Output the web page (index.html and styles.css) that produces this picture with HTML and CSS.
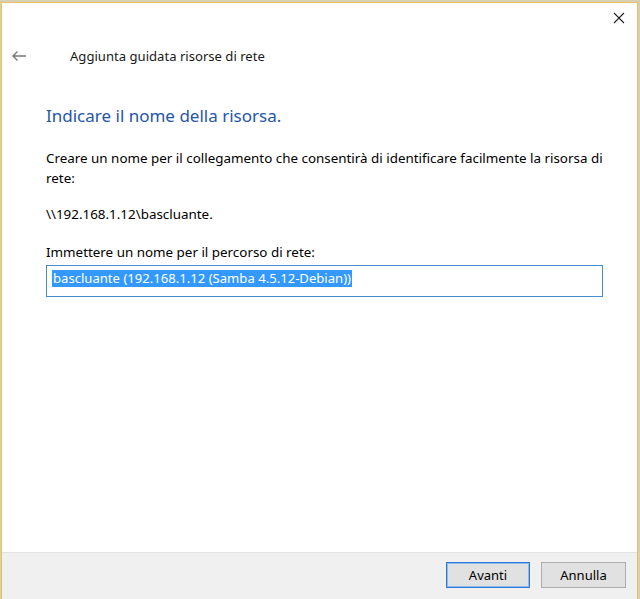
FILE: index.html
```html
<!DOCTYPE html>
<html lang="it">
<head>
<meta charset="utf-8">
<title>Aggiunta guidata risorse di rete</title>
<link rel="stylesheet" href="styles.css">
</head>
<body>
<div class="screen">
  <div class="window">
    <div class="titlebar">
      <svg class="close" width="12" height="12" viewBox="0 0 12 12"><path d="M1 1 L11 11 M11 1 L1 11" stroke="#222" stroke-width="1.1" fill="none"/></svg>
    </div>
    <div class="header">
      <svg class="back" width="16" height="12" viewBox="0 0 16 12"><path d="M15 6 H2 M6.5 1.5 L2 6 L6.5 10.5" stroke="#777" stroke-width="1.3" fill="none"/></svg>
      <span class="header-title">Aggiunta guidata risorse di rete</span>
    </div>
    <div class="content">
      <h1 class="instruction">Indicare il nome della risorsa.</h1>
      <p class="para">Creare un nome per il collegamento che consentirà di identificare facilmente la risorsa di rete:</p>
      <p class="path">\\192.168.1.12\bascluante.</p>
      <p class="label">Immettere un nome per il percorso di rete:</p>
      <div class="input"><span class="selected">bascluante (192.168.1.12 (Samba 4.5.12-Debian))</span></div>
    </div>
    <div class="footer">
      <button class="btn btn-default">Avanti</button>
      <button class="btn">Annulla</button>
    </div>
  </div>
</div>
</body>
</html>
```
FILE: styles.css
```css
html, body {
  margin: 0;
  padding: 0;
}
body {
  font-family: "Noto Sans", "Open Sans", sans-serif;
  font-size: 13px;
  color: #000;
}
.screen {
  width: 640px;
  height: 599px;
  background: #d9cfb4;
  overflow: hidden;
  display: flex;
  align-items: stretch;
}
.window {
  width: 635px;
  flex: none;
  margin: 2px 0 0 1px;
  border: 1px solid #e7c35f;
  border-bottom: none;
  background: #fff;
  display: flex;
  flex-direction: column;
}
.titlebar {
  height: 30px;
  display: flex;
  justify-content: flex-end;
  align-items: center;
  padding-right: 12px;
}
.close {
  display: block;
}
.header {
  margin-top: 11px;
  height: 24px;
  display: flex;
  align-items: center;
}
.back {
  margin-left: 9px;
  display: block;
}
.header-title {
  margin-left: 43px;
  font-size: 13.1px;
  color: #1a1a1a;
}
.content {
  flex: 1;
  padding-left: 44px;
}
.instruction {
  margin: 36px 0 0;
  font-size: 17px;
  font-weight: normal;
  line-height: 24px;
  color: #2556a8;
}
.para {
  margin: 20px 0 0;
  width: 572px;
  line-height: 20px;
  font-size: 13.4px;
}
.path {
  margin: 16px 0 0;
  line-height: 20px;
  font-size: 13.4px;
}
.label {
  margin: 18px 0 0;
  line-height: 20px;
  font-size: 13.4px;
}
.input {
  margin-top: 3px;
  width: 550px;
  height: 30px;
  border: 1px solid #4a8bcd;
  padding-left: 5px;
  display: flex;
  align-items: flex-start;
}
.selected {
  margin-top: 4px;
  background: #3399ff;
  color: #fff;
  font-size: 13.1px;
  line-height: 17px;
  padding: 0 1px;
}
.footer {
  height: 47px;
  border-top: 1px solid #e3e3e3;
  background: #f0f0f0;
  display: flex;
  justify-content: flex-end;
  align-items: flex-start;
  padding: 9px 11px 0 0;
  gap: 11px;
  box-sizing: border-box;
}
.btn {
  font-family: inherit;
  font-size: 13px;
  width: 85px;
  height: 26px;
  background: #e1e1e1;
  border: 1px solid #adadad;
  color: #000;
  padding: 0;
  margin: 0;
}
.btn-default {
  border: 1px solid #2a7ad6;
  box-shadow: inset 0 0 0 1px #8ebbee;
  width: 84px;
}
```
